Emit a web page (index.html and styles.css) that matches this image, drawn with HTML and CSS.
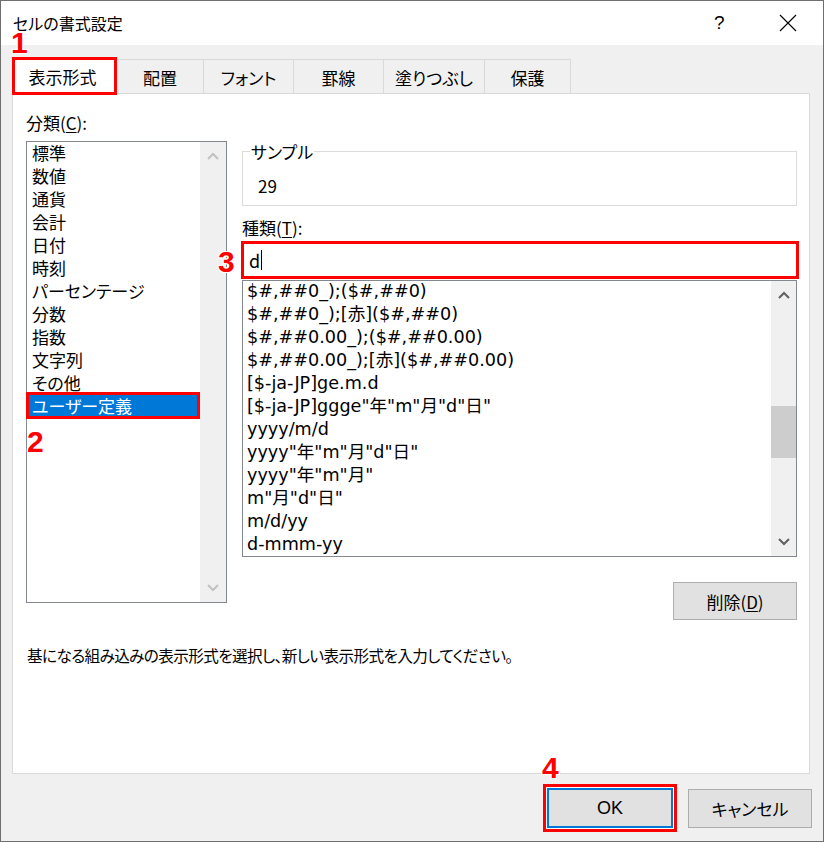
FILE: index.html
```html
<!DOCTYPE html>
<html lang="ja">
<head>
<meta charset="utf-8">
<title>セルの書式設定</title>
<link rel="stylesheet" href="styles.css">
</head>
<body>
<div class="window">
  <div class="titlebar">
    <span class="title">セルの書式設定</span>
    <span class="help">?</span>
    <span class="close"><svg width="18" height="18" viewBox="0 0 18 18"><path d="M1 1 L17 17 M17 1 L1 17" stroke="#000" stroke-width="1.1" fill="none"/></svg></span>
  </div>
  <div class="client">
    <div class="tabs">
      <div class="tab active">表示形式</div>
      <div class="tab w87">配置</div>
      <div class="tab w90">フォント</div>
      <div class="tab w90">罫線</div>
      <div class="tab w101">塗りつぶし</div>
      <div class="tab w87 last">保護</div>
    </div>
    <div class="panel">
      <div class="cols">
        <div class="left">
          <div class="label">分類(<u>C</u>):</div>
          <div class="catlist">
            <ul class="cat-items">
              <li>標準</li>
              <li>数値</li>
              <li>通貨</li>
              <li>会計</li>
              <li>日付</li>
              <li>時刻</li>
              <li>パーセンテージ</li>
              <li>分数</li>
              <li>指数</li>
              <li>文字列</li>
              <li>その他</li>
              <li class="selected">ユーザー定義</li>
            </ul>
            <div class="vscroll light">
              <svg class="arrow" width="12" height="8" viewBox="0 0 12 8"><path d="M1 7 L6 2 L11 7" stroke="#c2c2c2" stroke-width="2" fill="none"/></svg>
              <div class="spacer"></div>
              <svg class="arrow" width="12" height="8" viewBox="0 0 12 8"><path d="M1 1 L6 6 L11 1" stroke="#c2c2c2" stroke-width="2" fill="none"/></svg>
            </div>
          </div>
        </div>
        <div class="right">
          <fieldset class="sample">
            <legend>サンプル</legend>
            <div class="sample-val">29</div>
          </fieldset>
          <div class="label type-label">種類(<u>T</u>):</div>
          <div class="type-input">d<span class="caret"></span></div>
          <div class="fmtlist">
            <ul class="fmt-items">
              <li>$#,##0_);($#,##0)</li>
              <li>$#,##0_);[赤]($#,##0)</li>
              <li>$#,##0.00_);($#,##0.00)</li>
              <li>$#,##0.00_);[赤]($#,##0.00)</li>
              <li>[$-ja-JP]ge.m.d</li>
              <li>[$-ja-JP]ggge"年"m"月"d"日"</li>
              <li>yyyy/m/d</li>
              <li>yyyy"年"m"月"d"日"</li>
              <li>yyyy"年"m"月"</li>
              <li>m"月"d"日"</li>
              <li>m/d/yy</li>
              <li>d-mmm-yy</li>
            </ul>
            <div class="vscroll dark">
              <svg class="arrow" width="12" height="8" viewBox="0 0 12 8"><path d="M1 7 L6 2 L11 7" stroke="#606060" stroke-width="2" fill="none"/></svg>
              <div class="track-top"></div>
              <div class="thumb"></div>
              <div class="spacer"></div>
              <svg class="arrow" width="12" height="8" viewBox="0 0 12 8"><path d="M1 1 L6 6 L11 1" stroke="#606060" stroke-width="2" fill="none"/></svg>
            </div>
          </div>
          <div class="del-row"><button class="btn del">削除(<u>D</u>)</button></div>
        </div>
      </div>
      <p class="desc">基になる組み込みの表示形式を選択し、新しい表示形式を入力してください。</p>
    </div>
    <div class="buttons">
      <button class="btn ok">OK</button>
      <button class="btn cancel">キャンセル</button>
    </div>
  </div>
  <span class="num n1">1</span>
  <span class="num n2">2</span>
  <span class="num n3">3</span>
  <span class="num n4">4</span>
</div>
</body>
</html>
```
FILE: styles.css
```css
* { box-sizing: border-box; }
html, body { margin: 0; padding: 0; }
body {
  width: 824px;
  height: 842px;
  font-family: "Noto Sans CJK JP", "Noto Sans", sans-serif;
  font-size: 17px;
  color: #000;
  font-feature-settings: "palt";
  background: #f0f0f0;
}
.window {
  position: relative;
  width: 824px;
  height: 842px;
  border: 1px solid #6f6f6f;
  background: #f0f0f0;
  display: flex;
  flex-direction: column;
}
.titlebar {
  height: 44px;
  background: #fff;
  display: flex;
  align-items: center;
  padding-left: 12px;
}
.title { font-size: 16px; flex: 1; }
.help {
  font-family: "Liberation Sans", sans-serif;
  font-size: 19px;
  width: 65px;
  text-align: left;
}
.close { width: 44px; display: flex; align-items: center; }
.close svg { display: block; }
.client {
  flex: 1;
  padding: 14px 13px 0 11px;
}
.tabs {
  display: flex;
  height: 34px;
  position: relative;
  z-index: 2;
}
.tab {
  height: 34px;
  border-top: 1px solid #d9d9d9;
  border-left: 1px solid #d9d9d9;
  display: flex;
  align-items: center;
  justify-content: center;
  font-size: 17px;
  padding-top: 1px;
}
.tab.last { border-right: 1px solid #d9d9d9; }
.w87 { width: 87px; }
.w90 { width: 90px; }
.w101 { width: 101px; }
.tab.active {
  width: 105px;
  height: 38px;
  margin-top: -2px;
  margin-right: -1px;
  background: #fff;
  border: 3px solid #ff0000;
  padding-top: 0;
  padding-right: 4px;
  position: relative;
  z-index: 3;
}
.panel {
  height: 681px;
  background: #fff;
  border: 1px solid #d9d9d9;
  padding: 17px 12px 0 13px;
}
.cols { display: flex; gap: 15px; }
.left { width: 201px; }
.right { width: 555px; }
.label { line-height: 23px; height: 23px; }
.label u, .btn u { text-underline-offset: 2px; }
.catlist {
  margin-top: 7px;
  height: 462px;
  border: 1px solid #828790;
  display: flex;
}
ul { list-style: none; margin: 0; padding: 0; }
.cat-items { flex: 1; margin-top: -1px; }
.cat-items li {
  height: 23px;
  line-height: 23px;
  padding-left: 5px;
}
.cat-items li.selected {
  background: #0078d7;
  color: #fff;
  border: 3px solid #ff0000;
  height: 27px;
  line-height: 21px;
  margin: -2px 0 -2px -1px;
  padding-left: 3px;
}
.vscroll {
  width: 26px;
  background: #f0f0f0;
  display: flex;
  flex-direction: column;
  align-items: center;
}
.vscroll .arrow { flex: none; margin: 10px 0; }
.vscroll .spacer { flex: 1; }
.vscroll.dark { width: 25px; }
.track-top { height: 97px; flex: none; }
.thumb { height: 52px; width: 100%; background: #cdcdcd; flex: none; }
fieldset.sample {
  margin: 30px 0 0 0;
  padding: 12px 15px 8px 15px;
  border: 1px solid #dcdcdc;
  min-width: 0;
}
fieldset.sample legend {
  padding: 0 1px;
  margin-left: -8px;
  line-height: 21px;
}
.sample-val { line-height: 23px; height: 23px; }
.type-label { margin-top: 10px; }
.type-input {
  margin: 2px -2px 0 -1px;
  height: 38px;
  border: 3px solid #ff0000;
  background: #fff;
  display: flex;
  align-items: center;
  padding-left: 5px;
  font-size: 18px;
}
.caret {
  display: inline-block;
  width: 1px;
  height: 20px;
  background: #000;
  margin-left: 1px;
}
.fmtlist {
  margin-top: 1px;
  height: 277px;
  border: 1px solid #828790;
  display: flex;
  overflow: hidden;
}
.fmt-items {
  flex: 1;
  font-family: "DejaVu Sans", "Noto Sans CJK JP", sans-serif;
  font-size: 17.6px;
  font-feature-settings: normal;
  margin-top: -1px;
}
.fmt-items li {
  height: 23px;
  line-height: 23px;
  padding-left: 4px;
  white-space: nowrap;
}
.del-row {
  display: flex;
  justify-content: flex-end;
  margin-top: 25px;
}
.btn {
  font-family: "Noto Sans CJK JP", sans-serif;
  font-feature-settings: "palt";
  font-size: 17px;
  background: #e1e1e1;
  border: 1px solid #adadad;
  color: #000;
  padding: 0;
  margin: 0;
}
.del { width: 124px; height: 38px; }
.desc {
  margin: 24px 0 0 1px;
  line-height: 23px;
  font-size: 15.6px;
  letter-spacing: -0.6px;
}
.buttons {
  display: flex;
  justify-content: flex-end;
  align-items: center;
  gap: 15px;
  margin-top: 14px;
  margin-right: -2px;
}
.ok {
  width: 126px;
  height: 40px;
  border: 2px solid #0078d7;
  box-shadow: 0 0 0 1px #fff, 0 0 0 4px #ff0000;
  font-family: "Liberation Sans", sans-serif;
  font-size: 18px;
}
.cancel { width: 124px; height: 39px; }
.num {
  position: absolute;
  font-family: "Liberation Sans", sans-serif;
  font-weight: bold;
  font-size: 30px;
  line-height: 30px;
  color: #ff0000;
  text-shadow: 1px 0 0 #fff, -1px 0 0 #fff, 0 1px 0 #fff, 0 -1px 0 #fff, 1px 1px 0 #fff, -1px -1px 0 #fff, 1px -1px 0 #fff, -1px 1px 0 #fff;
  z-index: 10;
}
.n1 { left: 10px; top: 27px; }
.n2 { left: 26px; top: 426px; }
.n3 { left: 217px; top: 246px; }
.n4 { left: 541px; top: 752px; }
```
